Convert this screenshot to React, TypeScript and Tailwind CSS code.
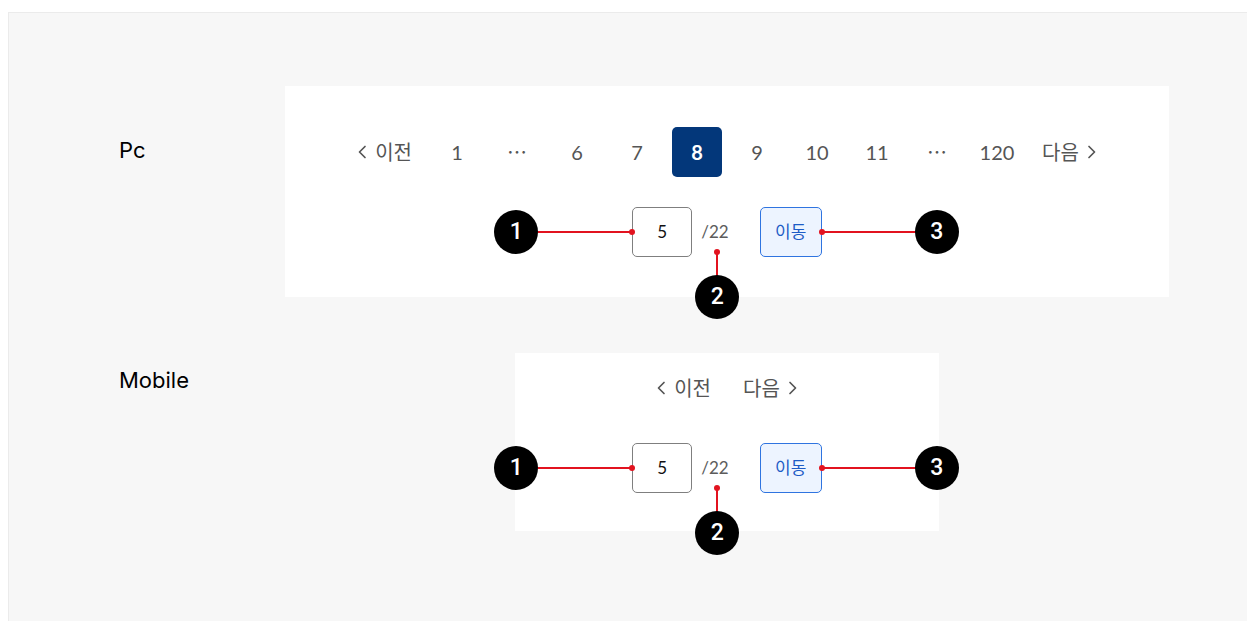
const font = { fontFamily: 'Lato, "Noto Sans CJK KR", sans-serif' }
const labelFont = { fontFamily: 'Inter, "Noto Sans CJK KR", sans-serif' }

function Chevron({ dir }: { dir: 'left' | 'right' }) {
  return (
    <svg width="10" height="16" viewBox="0 0 10 16" fill="none" className="shrink-0">
      <polyline
        points={dir === 'left' ? '8,2.5 2.5,8 8,13.5' : '2,2.5 7.5,8 2,13.5'}
        stroke="#555"
        strokeWidth="1.7"
        strokeLinecap="round"
        strokeLinejoin="round"
      />
    </svg>
  )
}

function Marker({ n, className }: { n: number; className: string }) {
  return (
    <div
      className={`absolute w-[44px] h-[44px] rounded-full bg-black text-white flex items-center justify-center text-[23px] font-medium ${className}`}
      style={{ fontFamily: 'Roboto, "Noto Sans", sans-serif' }}
    >
      {n}
    </div>
  )
}

function JumpRow() {
  return (
    <div className="relative flex items-center h-[50px]">
      <div className="w-[60px] h-[50px] border border-[#7f7f7f] rounded-[5px] flex items-center justify-center text-[17px] text-[#111]">
        5
      </div>
      <span className="ml-[9px] text-[17px] text-[#5c5c5c]">/22</span>
      <button className="ml-[31px] w-[62px] h-[50px] rounded-[5px] border border-[#2f74e0] bg-[#edf4ff] text-[17px] text-[#1d5cc6]">
        이동
      </button>

      {/* 1 : input */}
      <div className="absolute left-[-94px] top-[24px] w-[94px] h-[1.5px] bg-[#e2131f]" />
      <div className="absolute left-[-3px] top-[22px] w-[6px] h-[6px] rounded-full bg-[#e2131f]" />
      <Marker n={1} className="left-[-138px] top-[3px]" />

      {/* 2 : total */}
      <div className="absolute left-[84px] top-[45px] w-[1.5px] h-[24px] bg-[#e2131f]" />
      <div className="absolute left-[82px] top-[42px] w-[6px] h-[6px] rounded-full bg-[#e2131f]" />
      <Marker n={2} className="left-[63px] top-[68px]" />

      {/* 3 : button */}
      <div className="absolute right-[-94px] top-[24px] w-[94px] h-[1.5px] bg-[#e2131f]" />
      <div className="absolute right-[-3px] top-[22px] w-[6px] h-[6px] rounded-full bg-[#e2131f]" />
      <Marker n={3} className="right-[-137px] top-[3px]" />
    </div>
  )
}

function Prev() {
  return (
    <span className="px-[10px] flex items-center gap-[8px]">
      <Chevron dir="left" />
      이전
    </span>
  )
}

function Next() {
  return (
    <span className="px-[10px] flex items-center gap-[8px]">
      다음
      <Chevron dir="right" />
    </span>
  )
}

export default function App() {
  const pages = ['1', '⋯', '6', '7', '8', '9', '10', '11', '⋯', '120']

  return (
    <div className="w-full h-[621px] bg-white pt-[12px] pl-[8px] overflow-hidden" style={font}>
      <div className="h-[700px] border-t border-l border-[#ebebeb] bg-[#f7f7f7] pt-[73px] pl-[110px]">
        {/* PC */}
        <div className="flex">
          <div className="w-[166px] mt-[50px] text-[22px] leading-[28px] font-normal text-black" style={labelFont}>
            Pc
          </div>
          <div className="w-[884px] h-[211px] bg-white pt-[41px] flex flex-col items-center gap-[30px]">
            <div className="flex items-center gap-[10px] h-[50px] text-[20px] text-[#555]">
              <Prev />
              {pages.map((p, i) =>
                p === '8' ? (
                  <span
                    key={i}
                    className="w-[50px] h-[50px] rounded-[5px] bg-[#03377a] text-white font-bold flex items-center justify-center"
                  >
                    8
                  </span>
                ) : (
                  <span key={i} className="w-[50px] text-center">
                    {p}
                  </span>
                )
              )}
              <Next />
            </div>
            <JumpRow />
          </div>
        </div>

        {/* Mobile */}
        <div className="flex mt-[56px]">
          <div className="w-[166px] mt-[13px] text-[22px] leading-[28px] font-normal text-black" style={labelFont}>
            Mobile
          </div>
          <div className="w-[884px] flex justify-center">
            <div className="w-[424px] h-[178px] bg-white pt-[10px] flex flex-col items-center gap-[30px]">
              <div className="flex items-center gap-[12px] h-[50px] text-[20px] text-[#555]">
                <Prev />
                <Next />
              </div>
              <JumpRow />
            </div>
          </div>
        </div>
      </div>
    </div>
  )
}
